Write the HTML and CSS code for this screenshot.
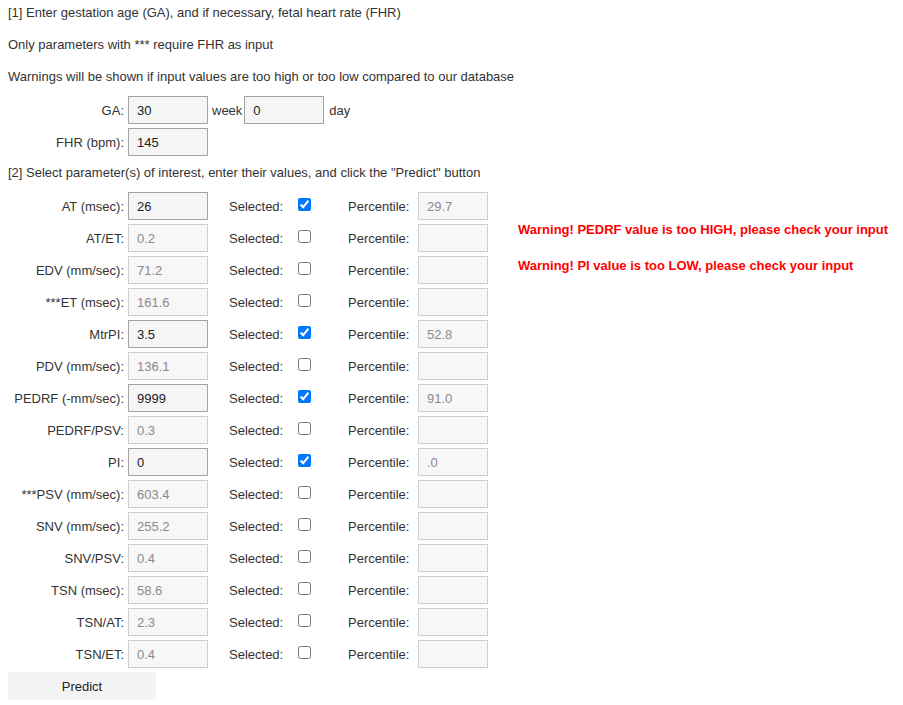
FILE: index.html
```html
<!DOCTYPE html>
<html>
<head>
<meta charset="utf-8">
<link rel="stylesheet" href="styles.css">
</head>
<body>
<div class="page">
  <p class="line">[1] Enter gestation age (GA), and if necessary, fetal heart rate (FHR)</p>
  <p class="line">Only parameters with *** require FHR as input</p>
  <p class="line">Warnings will be shown if input values are too high or too low compared to our database</p>

  <div class="ga">
    <div class="row">
      <label class="lbl">GA:</label>
      <input class="inp on" value="30">
      <span class="unit">week</span>
      <input class="inp on" value="0">
      <span class="unit day">day</span>
    </div>
    <div class="row">
      <label class="lbl">FHR (bpm):</label>
      <input class="inp on" value="145">
    </div>
  </div>

  <p class="line sec2">[2] Select parameter(s) of interest, enter their values, and click the "Predict" button</p>

  <div class="main">
    <div class="grid">
      <div class="row"><label class="lbl">AT (msec):</label><input class="inp on" value="26"><span class="sel">Selected:</span><input type="checkbox" class="cb" checked><span class="pct">Percentile:</span><input class="inp small off" value="29.7" disabled></div>
      <div class="row"><label class="lbl">AT/ET:</label><input class="inp off" value="0.2" disabled><span class="sel">Selected:</span><input type="checkbox" class="cb"><span class="pct">Percentile:</span><input class="inp small off" value="" disabled></div>
      <div class="row"><label class="lbl">EDV (mm/sec):</label><input class="inp off" value="71.2" disabled><span class="sel">Selected:</span><input type="checkbox" class="cb"><span class="pct">Percentile:</span><input class="inp small off" value="" disabled></div>
      <div class="row"><label class="lbl">***ET (msec):</label><input class="inp off" value="161.6" disabled><span class="sel">Selected:</span><input type="checkbox" class="cb"><span class="pct">Percentile:</span><input class="inp small off" value="" disabled></div>
      <div class="row"><label class="lbl">MtrPI:</label><input class="inp on" value="3.5"><span class="sel">Selected:</span><input type="checkbox" class="cb" checked><span class="pct">Percentile:</span><input class="inp small off" value="52.8" disabled></div>
      <div class="row"><label class="lbl">PDV (mm/sec):</label><input class="inp off" value="136.1" disabled><span class="sel">Selected:</span><input type="checkbox" class="cb"><span class="pct">Percentile:</span><input class="inp small off" value="" disabled></div>
      <div class="row"><label class="lbl">PEDRF (-mm/sec):</label><input class="inp on" value="9999"><span class="sel">Selected:</span><input type="checkbox" class="cb" checked><span class="pct">Percentile:</span><input class="inp small off" value="91.0" disabled></div>
      <div class="row"><label class="lbl">PEDRF/PSV:</label><input class="inp off" value="0.3" disabled><span class="sel">Selected:</span><input type="checkbox" class="cb"><span class="pct">Percentile:</span><input class="inp small off" value="" disabled></div>
      <div class="row"><label class="lbl">PI:</label><input class="inp on" value="0"><span class="sel">Selected:</span><input type="checkbox" class="cb" checked><span class="pct">Percentile:</span><input class="inp small off" value=".0" disabled></div>
      <div class="row"><label class="lbl">***PSV (mm/sec):</label><input class="inp off" value="603.4" disabled><span class="sel">Selected:</span><input type="checkbox" class="cb"><span class="pct">Percentile:</span><input class="inp small off" value="" disabled></div>
      <div class="row"><label class="lbl">SNV (mm/sec):</label><input class="inp off" value="255.2" disabled><span class="sel">Selected:</span><input type="checkbox" class="cb"><span class="pct">Percentile:</span><input class="inp small off" value="" disabled></div>
      <div class="row"><label class="lbl">SNV/PSV:</label><input class="inp off" value="0.4" disabled><span class="sel">Selected:</span><input type="checkbox" class="cb"><span class="pct">Percentile:</span><input class="inp small off" value="" disabled></div>
      <div class="row"><label class="lbl">TSN (msec):</label><input class="inp off" value="58.6" disabled><span class="sel">Selected:</span><input type="checkbox" class="cb"><span class="pct">Percentile:</span><input class="inp small off" value="" disabled></div>
      <div class="row"><label class="lbl">TSN/AT:</label><input class="inp off" value="2.3" disabled><span class="sel">Selected:</span><input type="checkbox" class="cb"><span class="pct">Percentile:</span><input class="inp small off" value="" disabled></div>
      <div class="row"><label class="lbl">TSN/ET:</label><input class="inp off" value="0.4" disabled><span class="sel">Selected:</span><input type="checkbox" class="cb"><span class="pct">Percentile:</span><input class="inp small off" value="" disabled></div>
    </div>
    <div class="warnings">
      <p class="warn">Warning! PEDRF value is too HIGH, please check your input</p>
      <p class="warn">Warning! PI value is too LOW, please check your input</p>
    </div>
  </div>

  <button class="predict">Predict</button>
</div>
</body>
</html>
```

FILE: styles.css
```css
html, body {
  margin: 0;
  padding: 0;
  background: #fff;
}
body {
  font-family: "Liberation Sans", Arial, sans-serif;
  font-size: 13px;
  color: #333;
}
.page {
  padding: 5px 8px 0 8px;
}
.line {
  margin: 0 0 16px 0;
  height: 16px;
  line-height: 16px;
}
.ga {
  margin-top: -7px;
}
.row {
  display: flex;
  align-items: center;
  height: 32px;
}
.lbl {
  width: 116px;
  padding-right: 4px;
  text-align: right;
  flex: none;
}
.inp {
  box-sizing: border-box;
  width: 80px;
  height: 28px;
  margin: 0;
  padding: 0 8px;
  font-family: "Liberation Sans", Arial, sans-serif;
  font-size: 13px;
  background: #f5f5f5;
  border-radius: 0;
  outline: none;
  flex: none;
}
.inp.on {
  border: 1px solid #a3a3a3;
  color: #222;
}
.inp.off {
  border: 1px solid #cfcfcf;
  color: #8a8a8a;
  background: #f7f7f7;
}
.inp.small {
  width: 70px;
}
.unit {
  margin: 0 2px 0 4px;
}
.unit.day {
  margin-left: 5px;
}
.sec2 {
  margin-top: 7px;
  margin-bottom: 0;
}
.main {
  display: flex;
  margin-top: 9px;
}
.grid {
  flex: none;
}
.sel {
  width: 69px;
  margin-left: 21px;
  flex: none;
}
.cb {
  width: 13px;
  height: 13px;
  margin: -3px 0 0 0;
  flex: none;
}
.pct {
  width: 70px;
  margin-left: 37px;
  flex: none;
}
.warnings {
  margin-left: 30px;
  padding-top: 32px;
  display: flex;
  flex-direction: column;
  gap: 20px;
}
.warn {
  margin: 0;
  line-height: 16px;
  font-size: 13px;
  font-weight: bold;
  color: #f00;
}
.predict {
  display: block;
  width: 148px;
  height: 28px;
  margin-top: 2px;
  border: none;
  background: #f4f4f4;
  font-family: "Liberation Sans", Arial, sans-serif;
  font-size: 13px;
  color: #222;
  padding: 0;
}
```
